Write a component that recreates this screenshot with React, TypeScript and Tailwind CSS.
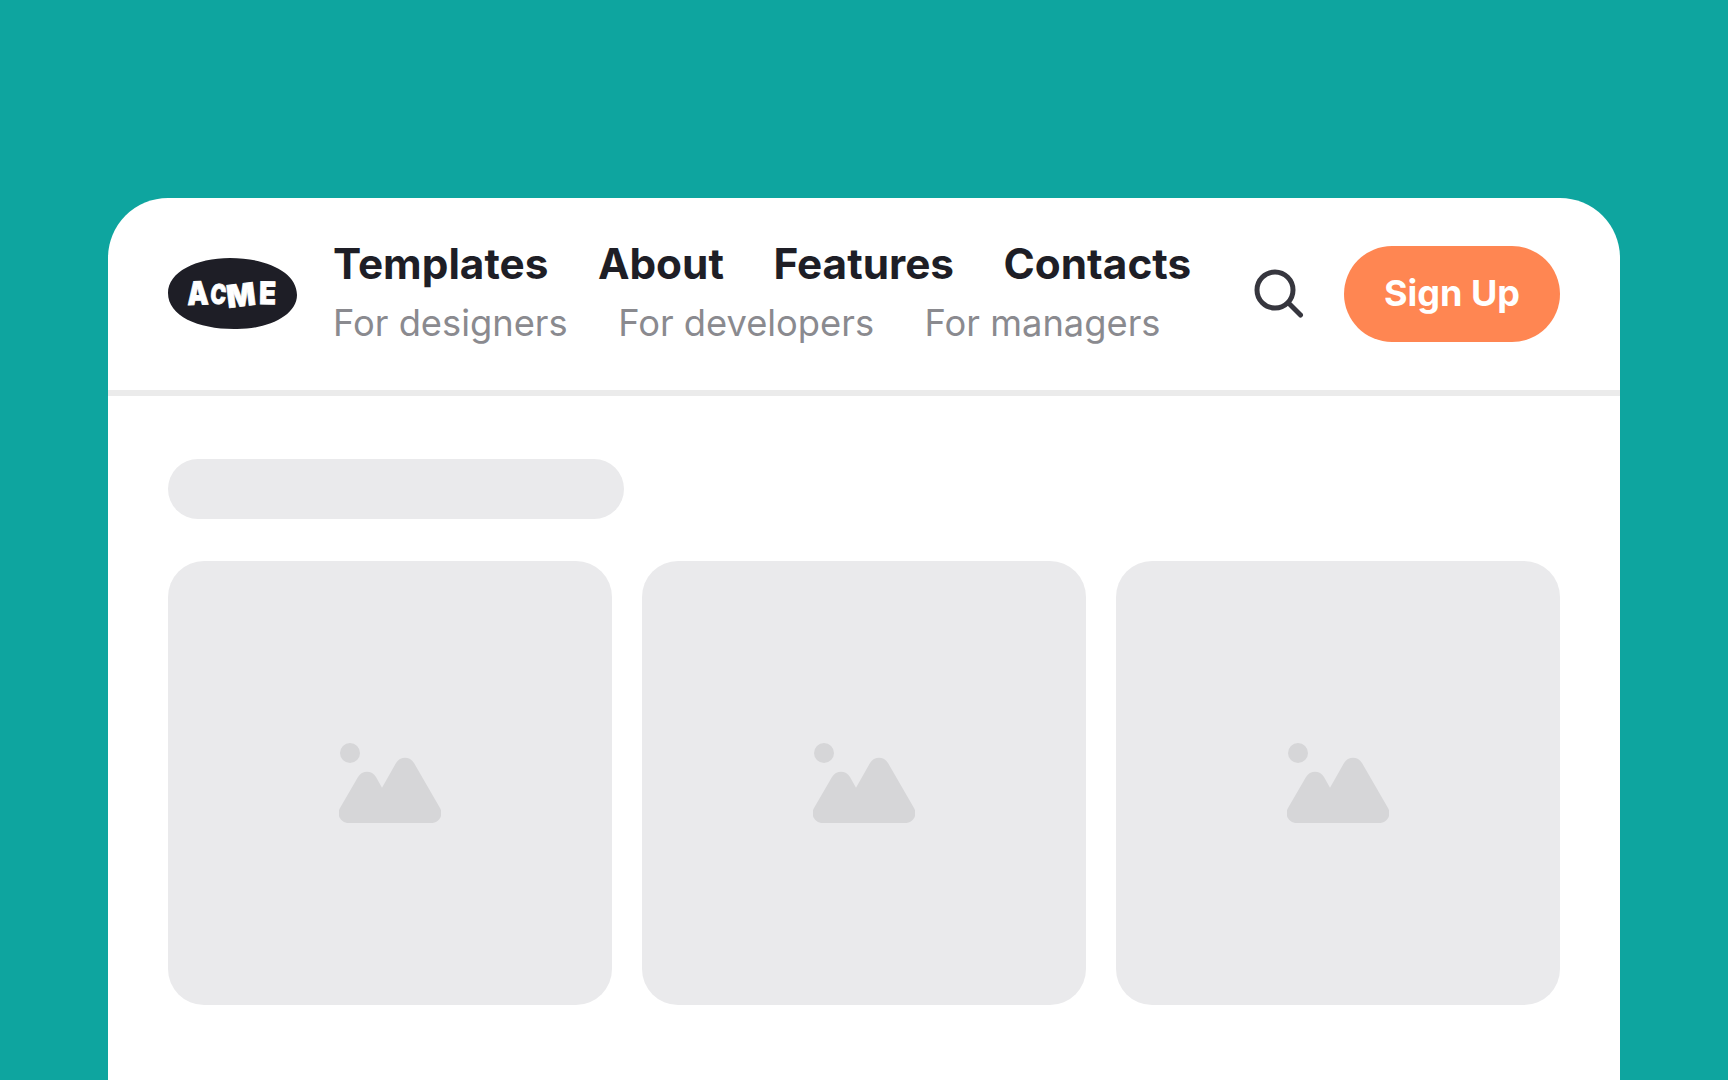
import React from 'react';

const mainLinks = ['Templates', 'About', 'Features', 'Contacts'];
const subLinks = ['For designers', 'For developers', 'For managers'];

const AcmeLogo: React.FC = () => (
  <svg width="129" height="72" viewBox="0 0 129 72" className="shrink-0">
    <path
      d="M62 0C98 0 129 14 129 37C129 58 98 72 66 71C30 71 0 58 0 35C0 14 28 0 62 0Z"
      fill="#1E1E26"
    />
    <g fill="#fff" stroke="#fff" strokeWidth="0.8" fontFamily="Inter, sans-serif" fontWeight="900" fontSize="32">
      <text transform="translate(19.5 47) rotate(-2) scale(0.84 1)">A</text>
      <text transform="translate(41.5 45) rotate(6) scale(0.66 0.85)">C</text>
      <text transform="translate(60 50) rotate(-7) scale(0.94 0.97)">M</text>
      <text transform="translate(91 46) rotate(1) scale(0.86 0.97)">E</text>
    </g>
  </svg>
);

const SearchIcon: React.FC = () => (
  <svg width="50" height="50" viewBox="0 0 50 50" fill="none" className="shrink-0">
    <circle cx="21" cy="21" r="18" stroke="#36363E" strokeWidth="5" />
    <path d="M35 34.5L46.5 46" stroke="#36363E" strokeWidth="5" strokeLinecap="round" />
  </svg>
);

const PictureIcon: React.FC = () => (
  <svg width="102" height="80" viewBox="19 23 102 80">
    <circle cx="30" cy="33" r="10" fill="#D6D6D8" />
    <path
      d="M29 103C21 103 16 95 20 88L38 57C42 50 52 50 56 57L62 67.7L76 43C80 36 90 36 94 43L120 88C124 95 119 103 111 103Z"
      fill="#D6D6D8"
    />
  </svg>
);

const App: React.FC = () => {
  return (
    <div className="h-screen overflow-hidden bg-[#0EA59F] px-[108px] pt-[198px] font-['Inter',sans-serif]">
      <div className="h-full rounded-t-[60px] bg-white">
        <header className="flex h-[198px] items-center border-b-[6px] border-[#EBEBEB] px-[60px]">
          <AcmeLogo />
          <nav className="ml-[36px] flex-1 pb-[4px]">
            <div className="flex gap-[49.5px] text-[42.3px] leading-[50px] font-bold text-[#1E1E26]">
              {mainLinks.map(link => (
                <a key={link}>{link}</a>
              ))}
            </div>
            <div className="mt-[12px] flex gap-[50.5px] text-[36.3px] leading-[44px] text-[#8A8A8F]">
              {subLinks.map(link => (
                <a key={link}>{link}</a>
              ))}
            </div>
          </nav>
          <div className="flex items-center gap-[40px]">
            <SearchIcon />
            <button className="h-[96px] w-[216px] rounded-full bg-[#FF8652] pb-[2px] text-[36px] font-bold text-white">
              Sign Up
            </button>
          </div>
        </header>
        <main className="px-[60px] pt-[63px]">
          <div className="h-[60px] w-[456px] rounded-full bg-[#EAEAEC]" />
          <div className="mt-[42px] grid grid-cols-3 gap-[30px]">
            {[0, 1, 2].map(i => (
              <div key={i} className="flex h-[444px] items-center justify-center rounded-[36px] bg-[#EAEAEC]">
                <PictureIcon />
              </div>
            ))}
          </div>
        </main>
      </div>
    </div>
  );
};

export default App;
